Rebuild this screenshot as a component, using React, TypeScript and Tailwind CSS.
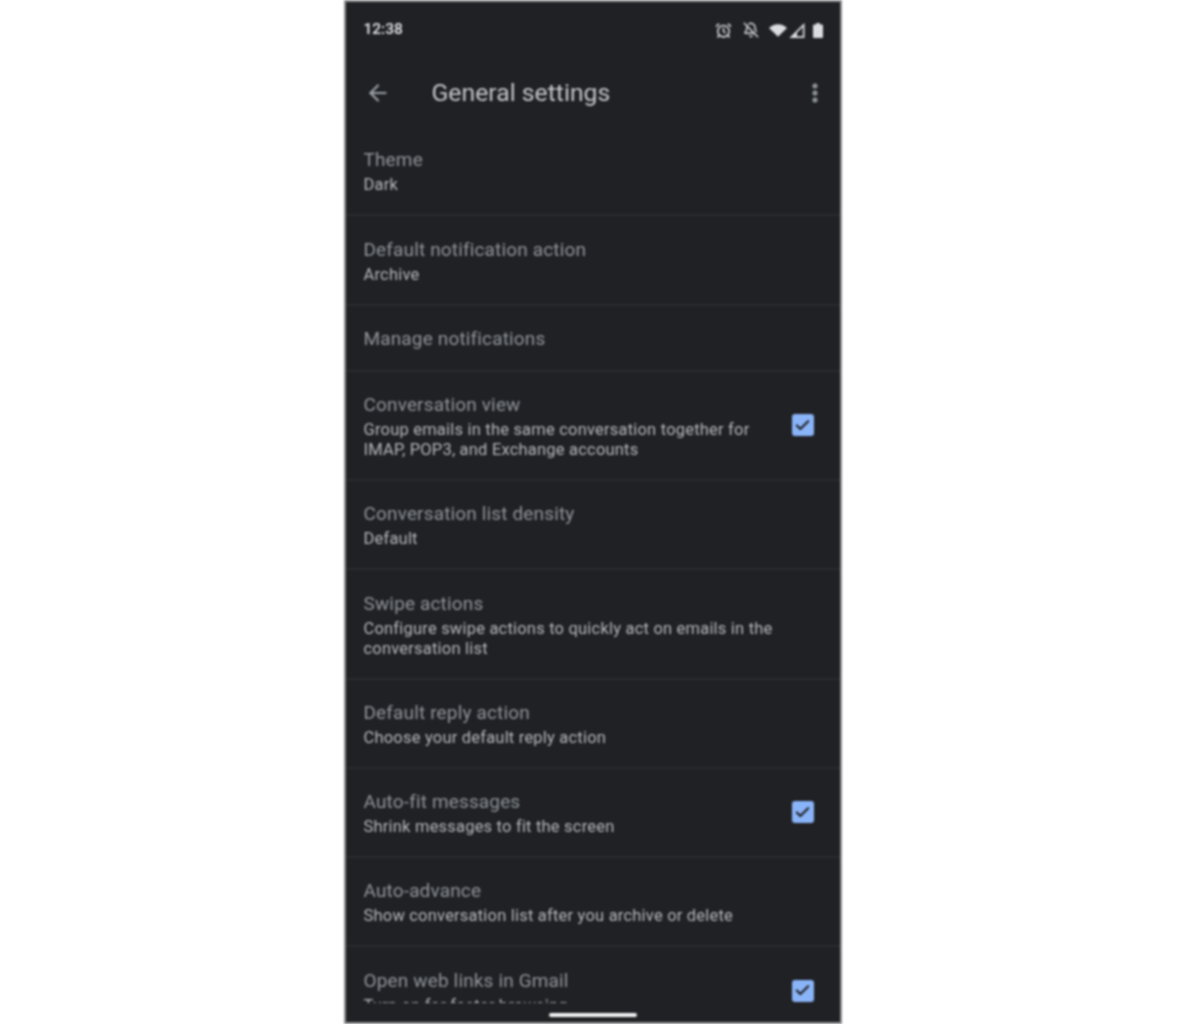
import { AlarmClock, ArrowLeft, BellOff, Check, EllipsisVertical } from "lucide-react";

type Setting = {
  title: string;
  lines?: string[];
  checked?: boolean;
};

const settings: Setting[] = [
  { title: "Theme", lines: ["Dark"] },
  { title: "Default notification action", lines: ["Archive"] },
  { title: "Manage notifications" },
  {
    title: "Conversation view",
    lines: ["Group emails in the same conversation together for", "IMAP, POP3, and Exchange accounts"],
    checked: true,
  },
  { title: "Conversation list density", lines: ["Default"] },
  {
    title: "Swipe actions",
    lines: ["Configure swipe actions to quickly act on emails in the", "conversation list"],
  },
  { title: "Default reply action", lines: ["Choose your default reply action"] },
  { title: "Auto-fit messages", lines: ["Shrink messages to fit the screen"], checked: true },
  { title: "Auto-advance", lines: ["Show conversation list after you archive or delete"] },
  { title: "Open web links in Gmail", lines: ["Turn on for faster browsing"], checked: true },
];

function StatusIcons() {
  return (
    <div className="flex items-center text-[#dadce0]">
      <AlarmClock className="size-[17px]" strokeWidth={2.2} />
      <BellOff className="ml-[11px] size-[16px]" strokeWidth={2.2} />
      <svg viewBox="0 0 20 14" className="ml-[10px] h-[13px] w-[18px]" fill="currentColor">
        <path d="M10 14 0 4.2C2.6 1.6 6.1 0 10 0s7.4 1.6 10 4.2z" />
      </svg>
      <svg viewBox="0 0 14 14" className="ml-[2px] h-[15px] w-[16px]" fill="none" stroke="currentColor" strokeWidth="1.6">
        <path d="M1.8 13.2 13.2 1.8v11.4z" />
        <path d="M1.8 13.2 7 8v5.2z" fill="currentColor" stroke="none" />
      </svg>
      <svg viewBox="0 0 10 15" className="ml-[8px] h-[15px] w-[10px]" fill="currentColor">
        <path d="M3.2 0h3.6v1.6H9a1 1 0 0 1 1 1V14a1 1 0 0 1-1 1H1a1 1 0 0 1-1-1V2.6a1 1 0 0 1 1-1h2.2z" />
      </svg>
    </div>
  );
}

function SettingRow({ title, lines, checked }: Setting) {
  return (
    <div className="flex items-center border-b-2 border-[#2a2b2e] pr-[26px] pl-[18px]">
      <div className="min-w-0 flex-1 pt-[21.25px] pb-[19px]">
        <div className="text-[19px] leading-6 tracking-[0.15px] whitespace-nowrap text-[#8f9499]">{title}</div>
        {lines && (
          <div className="mt-[3px] text-[16.5px] leading-5 tracking-[0.2px] whitespace-nowrap text-[#b4b7bb]">
            {lines.map((line) => (
              <div key={line}>{line}</div>
            ))}
          </div>
        )}
      </div>
      {checked && (
        <div className="flex size-[22px] shrink-0 items-center justify-center rounded-[3px] bg-[#8ab4f8]">
          <Check className="size-[17px] text-[#202124]" strokeWidth={3} />
        </div>
      )}
    </div>
  );
}

export default function App() {
  return (
    <div className="min-h-[1024px] bg-white font-['Roboto',sans-serif]">
      <div className="mx-auto flex h-[1024px] w-[498px] flex-col border-2 border-[#8b8c8e] bg-[#202124] blur-[0.8px]">
        <div className="flex h-[56px] shrink-0 items-center justify-between pr-[17px] pl-[18px]">
          <span className="text-[15.5px] font-medium text-[#e8eaed]">12:38</span>
          <StatusIcons />
        </div>

        <div className="flex h-[69px] shrink-0 items-center pt-[1px] pr-[13px] pl-[19px]">
          <ArrowLeft className="size-[26px] text-[#9aa0a6]" strokeWidth={2} />
          <h1 className="ml-[41px] flex-1 text-[24.75px] leading-8 text-[#c4c7c9]">General settings</h1>
          <EllipsisVertical className="size-[24px] text-[#9aa0a6]" strokeWidth={3} />
        </div>

        <div className="min-h-0 flex-1 overflow-hidden">
          {settings.map((setting) => (
            <SettingRow key={setting.title} {...setting} />
          ))}
        </div>

        <div className="flex h-[19px] shrink-0 items-center justify-center">
          <div className="mt-[4px] h-[4px] w-[88px] rounded-full bg-[#f1f3f4]" />
        </div>
      </div>
    </div>
  );
}
